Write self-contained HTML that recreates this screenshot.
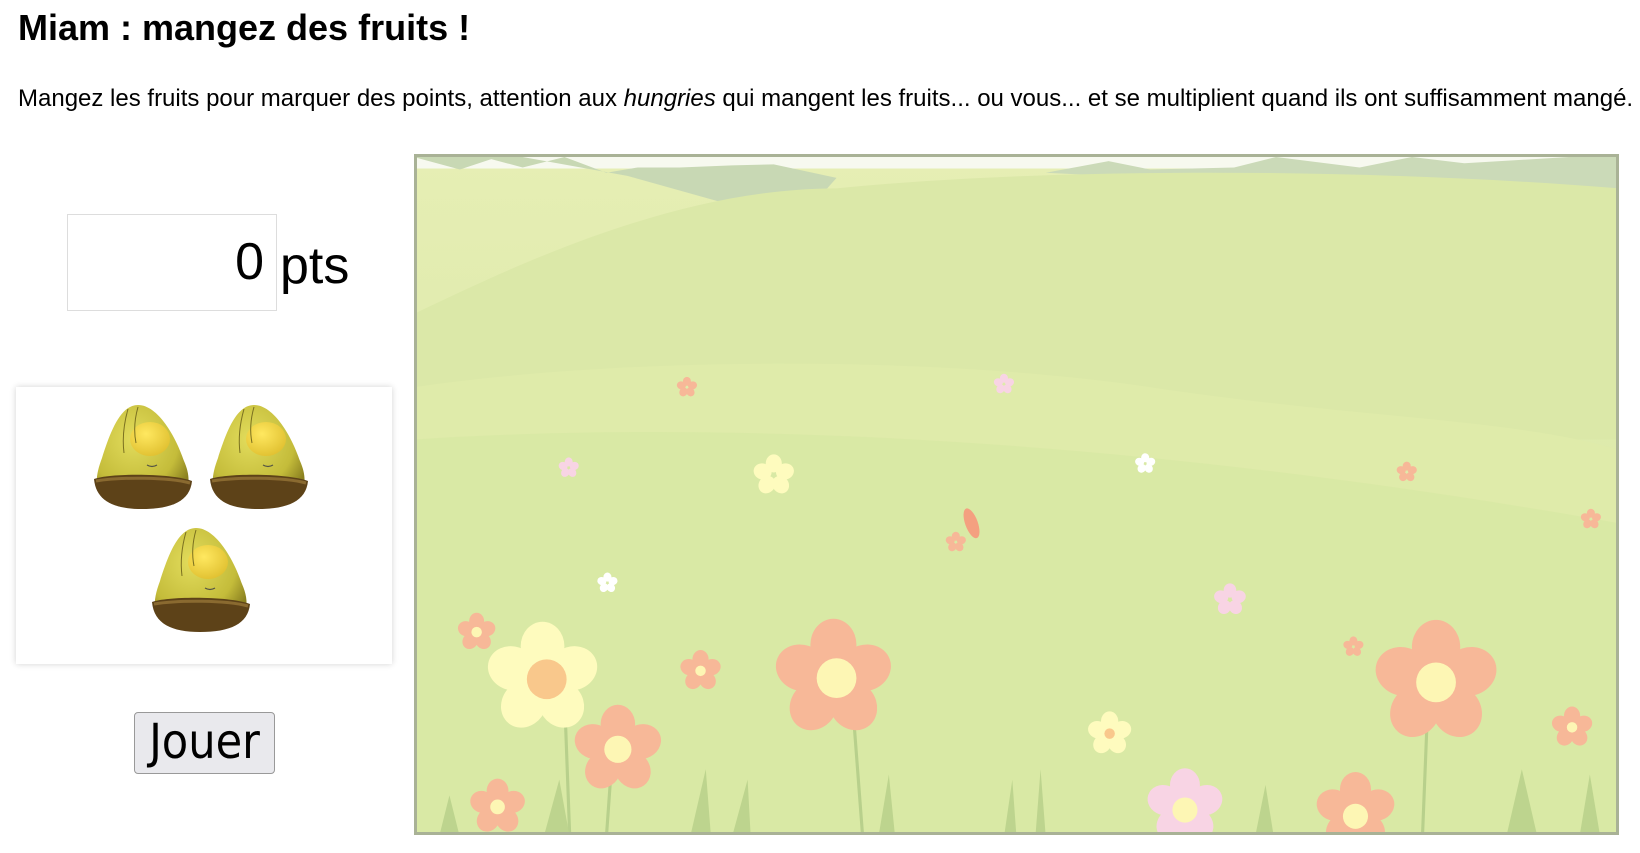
<!DOCTYPE html>
<html><head><meta charset="utf-8"><style>
body{margin:0;background:#fff;font-family:"Liberation Sans",sans-serif;width:1640px;height:853px;overflow:hidden;position:relative}
h1{position:absolute;left:18px;top:7px;margin:0;font-size:36px;font-weight:bold}
p{position:absolute;left:18px;top:85px;margin:0;font-size:24px;white-space:nowrap}
#score{position:absolute;left:67px;top:214px;width:210px;height:97px;border:1px solid #ddd;box-sizing:border-box;text-align:right;font-size:52px;line-height:95px;padding-right:12px}
#pts{position:absolute;left:280px;top:216px;font-size:52px;line-height:100px}
#panel{position:absolute;left:16px;top:387px;width:376px;height:277px;background:#fff;box-shadow:0 0 6px rgba(0,0,0,.18)}
#btn{position:absolute;left:134px;top:712px;width:141px;height:62px;box-sizing:border-box;border:1px solid #999;border-radius:4px;background:#e9e9ed;font-family:"DejaVu Sans Condensed","DejaVu Sans",sans-serif;font-size:48px;text-align:center;line-height:58px}
#game{position:absolute;left:414px;top:154px;width:1205px;height:681px;border:3px solid #a9b296;box-sizing:border-box;overflow:hidden}
</style></head><body>
<h1>Miam : mangez des fruits !</h1>
<p>Mangez les fruits pour marquer des points, attention aux <i>hungries</i> qui mangent les fruits... ou vous... et se multiplient quand ils ont suffisamment mangé.</p>
<div id="score">0</div><div id="pts">pts</div>
<div id="panel"><svg width="376" height="277" viewBox="0 0 376 277">
<defs>
<radialGradient id="bd" cx="0.4" cy="0.35" r="0.7"><stop offset="0" stop-color="#e2dc5c"/><stop offset="0.7" stop-color="#c4bc3a"/><stop offset="1" stop-color="#8a8020"/></radialGradient>
<radialGradient id="ns" cx="0.4" cy="0.35" r="0.7"><stop offset="0" stop-color="#ffe860"/><stop offset="1" stop-color="#e0c030"/></radialGradient>
<g id="h">
<path d="M48 2 C30 2 20 30 12 55 C4 76 4 92 20 100 L84 100 C100 92 102 76 94 58 C86 34 68 2 48 2Z" fill="url(#bd)"/>
<path d="M4 76 C20 70 82 70 102 78 C100 98 82 106 52 106 C24 106 6 98 4 76Z" fill="#5d4218"/>
<path d="M6 78 C30 74 78 74 100 80" stroke="#8a6a30" stroke-width="3" fill="none"/>
<ellipse cx="60" cy="36" rx="20" ry="17" fill="url(#ns)"/>
<path d="M57 62 q5 3 10 0" stroke="#554" stroke-width="1.2" fill="none"/>
<path d="M38 6 C34 20 32 34 34 50 M48 4 C44 18 44 30 46 40" stroke="#7a7020" stroke-width="1" fill="none"/>
</g></defs>
<use href="#h" x="74" y="16"/><use href="#h" x="190" y="16"/><use href="#h" x="132" y="139"/>
</svg></div>
<div id="btn">Jouer</div>
<div id="game"><svg width="1199" height="675" viewBox="399 150 1146 645" preserveAspectRatio="none">
<defs>
<linearGradient id="bg" x1="0" y1="0" x2="0" y2="1"><stop offset="0" stop-color="#e6eeb4"/><stop offset="1" stop-color="#d3e6a0"/></linearGradient>
<g id="f"><ellipse cx="0" cy="-0.8" rx="0.55" ry="0.62"/><ellipse transform="rotate(72)" cx="0" cy="-0.8" rx="0.55" ry="0.62"/><ellipse transform="rotate(144)" cx="0" cy="-0.8" rx="0.55" ry="0.62"/><ellipse transform="rotate(216)" cx="0" cy="-0.8" rx="0.55" ry="0.62"/><ellipse transform="rotate(288)" cx="0" cy="-0.8" rx="0.55" ry="0.62"/></g>
</defs>
<rect x="396" y="147" width="1160" height="660" fill="url(#bg)"/>
<rect x="396" y="147" width="1160" height="14" fill="#f7f9ef"/>
<path d="M396 150 L440 162 L470 152 L500 160 L540 150 L580 165 L610 160 L650 160 L700 158 L740 157 L800 170 L760 215 L700 196 L600 168 L500 150Z" fill="#c8d8b4"/>
<path d="M1000 165 L1060 154 L1100 162 L1180 160 L1220 150 L1300 160 L1350 150 L1400 156 L1500 150 L1548 150 L1548 180 L1300 172 L1100 170Z" fill="#cbdab8"/>
<path d="M396 300 C500 250 650 180 800 180 C1000 160 1300 160 1548 180 L1548 420 L396 420Z" fill="#dbe8a8"/>
<path d="M396 370 C600 340 900 340 1100 370 C1300 400 1450 400 1548 430 L1548 800 L396 800Z" fill="#dfebaa"/>
<path d="M396 420 C700 400 1100 420 1548 500 L1548 800 L396 800Z" fill="#d6e7a2" opacity="0.6"/>
<g stroke="#b8d08c" stroke-width="3" fill="none"><path d="M540 665 L545 800"/><path d="M815 668 L825 800"/><path d="M1365 675 L1360 800"/><path d="M585 730 L580 800"/></g>
<g fill="#bdd48e"><path d="M660 800 L675 735 L680 800Z M700 800 L715 745 L718 800Z M840 800 L850 740 L856 800Z M960 800 L968 745 L972 800Z M990 800 L995 735 L1000 800Z M1440 800 L1455 735 L1470 800Z M1510 800 L1520 740 L1530 800Z M420 800 L430 760 L440 800Z M520 800 L535 745 L545 800Z M1200 800 L1210 750 L1218 800Z M1270 800 L1280 760 L1288 800Z"/></g>
<g fill="#fefbbe"><use href="#f" transform="translate(519,648) scale(38)"/><use href="#f" transform="translate(740,454) scale(14)"/><use href="#f" transform="translate(1061,701) scale(15)"/></g>
<g fill="#f7b898"><use href="#f" transform="translate(591,716) scale(30)"/><use href="#f" transform="translate(797,648) scale(40)"/><use href="#f" transform="translate(1373,652) scale(42)"/><use href="#f" transform="translate(456,604) scale(13)"/><use href="#f" transform="translate(670,641) scale(14)"/><use href="#f" transform="translate(476,771) scale(19)"/><use href="#f" transform="translate(1296,776) scale(27)"/><use href="#f" transform="translate(1503,695) scale(14)"/><use href="#f" transform="translate(1294,618) scale(7)"/><use href="#f" transform="translate(1345,451) scale(7)"/><use href="#f" transform="translate(1521,496) scale(7)"/><use href="#f" transform="translate(657,370) scale(7)"/><use href="#f" transform="translate(914,518) scale(7)"/></g>
<g fill="#f8d4e4"><use href="#f" transform="translate(1133,771) scale(26)"/><use href="#f" transform="translate(1176,573) scale(11)"/><use href="#f" transform="translate(960,367) scale(7)"/><use href="#f" transform="translate(544,447) scale(7)"/></g>
<g fill="#fff"><use href="#f" transform="translate(1095,443) scale(7)"/><use href="#f" transform="translate(581,557) scale(7)"/></g>
<g fill="#f9c88c"><circle cx="523" cy="649" r="19"/><circle cx="1061" cy="701" r="5"/></g>
<g fill="#fdf6b4"><circle cx="591" cy="716" r="13"/><circle cx="800" cy="648" r="19"/><circle cx="1373" cy="652" r="19"/><circle cx="1296" cy="780" r="12"/><circle cx="1133" cy="774" r="12"/><circle cx="476" cy="771" r="7"/><circle cx="670" cy="641" r="5"/><circle cx="456" cy="604" r="5"/><circle cx="1503" cy="695" r="5"/></g>
<ellipse cx="929" cy="500" rx="6" ry="15" fill="#f4a080" transform="rotate(-20 929 500)"/>
</svg></div>
</body></html>
